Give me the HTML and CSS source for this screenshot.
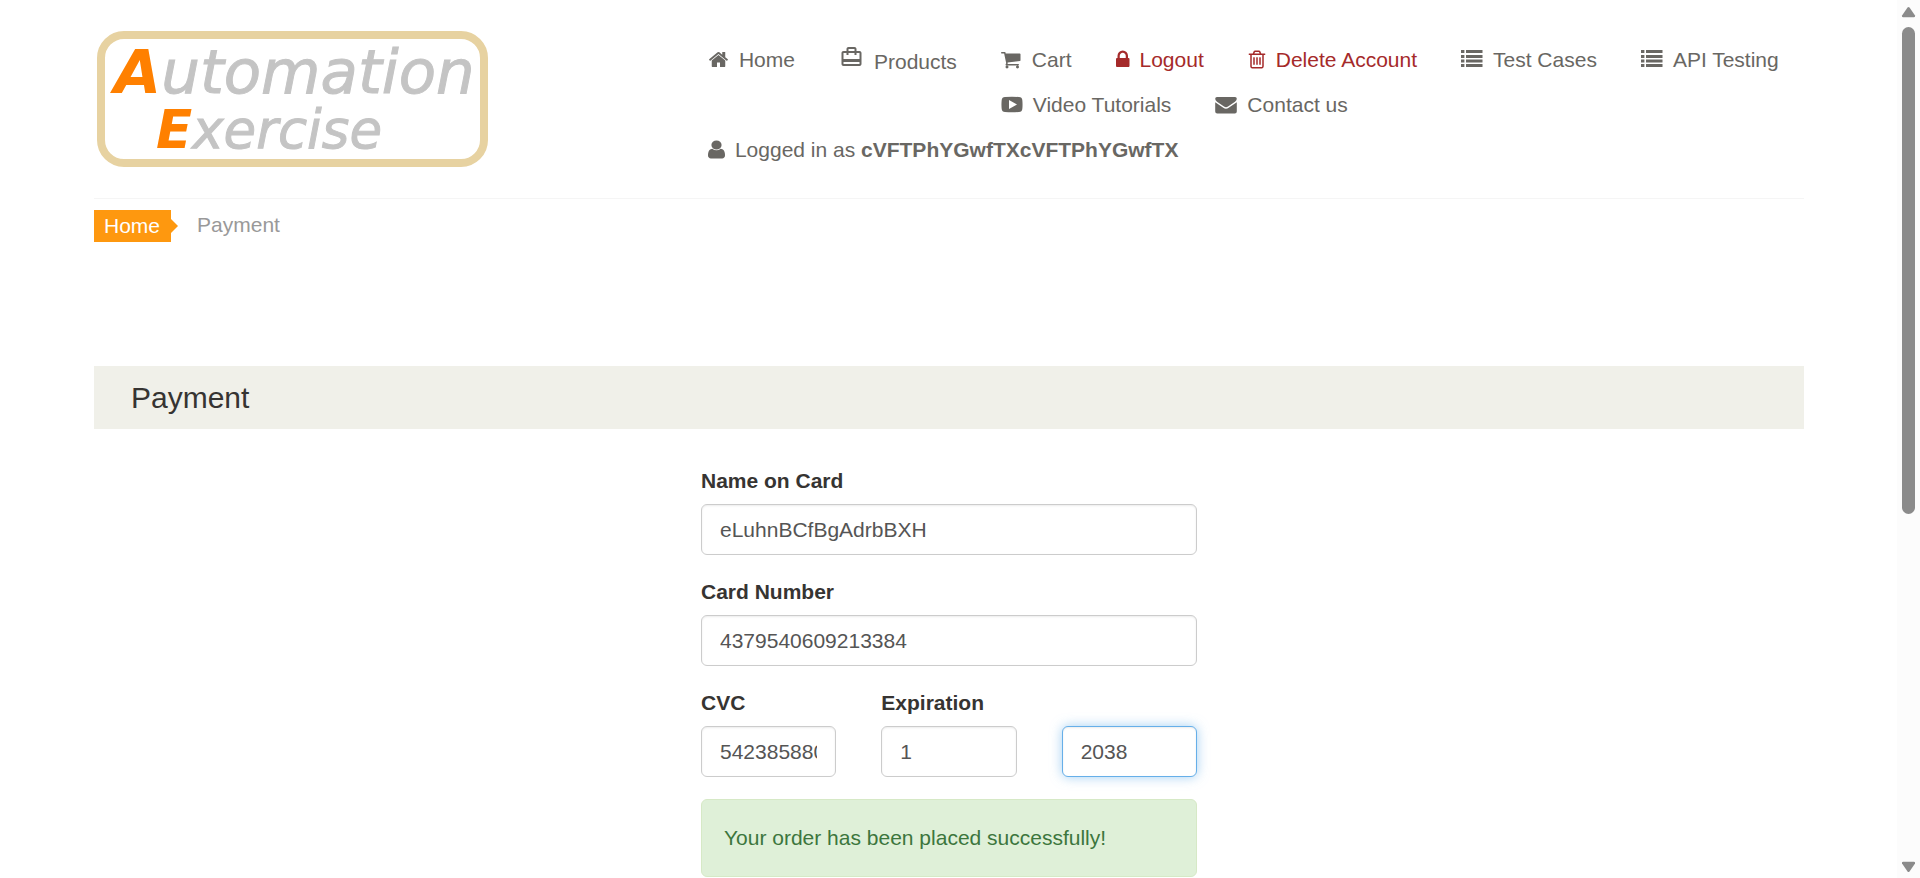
FILE: index.html
```html
<!DOCTYPE html>
<html lang="en">
<head>
<meta charset="utf-8">
<title>Automation Exercise - Payment</title>
<link rel="stylesheet" href="styles.css">
</head>
<body>
<div class="page">
  <header class="header">
    <a class="logo" href="#" aria-label="Automation Exercise">
      <svg width="391" height="136" viewBox="0 0 391 136">
        <rect class="logo-frame" x="4" y="4" width="383" height="128" rx="23"/>
        <text class="logo-line" x="17" y="62"><tspan class="logo-cap">A</tspan>utomation</text>
        <text class="logo-line logo-line-small" x="59" y="117"><tspan class="logo-cap">E</tspan>xercise</text>
      </svg>
    </a>
    <nav>
      <ul class="menu">
        <li><a href="#"><svg class="icon" width="21" height="21" viewBox="0 0 1792 1792"><path d="M1472 992v480q0 26-19 45t-45 19h-384v-384h-256v384h-384q-26 0-45-19t-19-45v-480q0-1 .5-3t.5-3l575-474 575 474q1 2 1 6zm223-69l-62 74q-8 9-21 11h-3q-13 0-21-7l-692-577-692 577q-12 8-24 7-13-2-21-11l-62-74q-8-10-7-23.5t11-21.5l719-599q32-26 76-26t76 26l244 204v-195q0-14 9-23t23-9h192q14 0 23 9t9 23v408l219 182q10 8 11 21.5t-7 23.5z"/></svg>Home</a></li>
        <li><a href="#"><svg class="icon icon-bag" width="25" height="24" viewBox="0 0 24 24"><path d="M20 6h-3V4c0-1.11-.89-2-2-2H9c-1.11 0-2 .89-2 2v2H4c-1.11 0-2 .89-2 2v11c0 1.11.89 2 2 2h16c1.11 0 2-.89 2-2V8c0-1.11-.89-2-2-2zM9 4h6v2H9V4zm11 15H4v-2h16v2zm0-5H4V8h3v2h2V8h6v2h2V8h3v6z"/></svg>Products</a></li>
        <li><a href="#"><svg class="icon" width="21" height="21" viewBox="64 0 1792 1792"><path d="M704 1536q0 52-38 90t-90 38-90-38-38-90 38-90 90-38 90 38 38 90zm896 0q0 52-38 90t-90 38-90-38-38-90 38-90 90-38 90 38 38 90zm128-1088v512q0 24-16.5 42.5t-40.5 21.5l-1044 122q13 60 13 70 0 16-24 64h920q26 0 45 19t19 45-19 45-45 19h-1024q-26 0-45-19t-19-45q0-11 8-31.5t16-36 21.5-40 15.5-29.5l-177-823h-204q-26 0-45-19t-19-45 19-45 45-19h256q16 0 28.5 6.5t19.5 15.5 13 24.5 8 26 5.5 29.5 4.5 26h1201q26 0 45 19t19 45z"/></svg>Cart</a></li>
        <li><a class="danger" href="#"><svg class="icon" width="14" height="21" viewBox="320 0 1195 1792"><path d="M640 768h512v-192q0-106-75-181t-181-75-181 75-75 181v192zm832 96v576q0 40-28 68t-68 28h-960q-40 0-68-28t-28-68v-576q0-40 28-68t68-28h32v-192q0-184 132-316t316-132 316 132 132 316v192h32q40 0 68 28t28 68z"/></svg>Logout</a></li>
        <li><a class="danger" href="#"><svg class="icon" width="18" height="21" viewBox="128 0 1536 1792"><path d="M704 736v576q0 14-9 23t-23 9h-64q-14 0-23-9t-9-23v-576q0-14 9-23t23-9h64q14 0 23 9t9 23zm256 0v576q0 14-9 23t-23 9h-64q-14 0-23-9t-9-23v-576q0-14 9-23t23-9h64q14 0 23 9t9 23zm256 0v576q0 14-9 23t-23 9h-64q-14 0-23-9t-9-23v-576q0-14 9-23t23-9h64q14 0 23 9t9 23zm128 724v-948h-896v948q0 22 7 40.5t14.5 27 10.5 8.5h832q3 0 10.5-8.5t14.5-27 7-40.5zm-672-1076h448l-48-117q-7-9-17-11h-317q-10 2-17 11zm928 32v64q0 14-9 23t-23 9h-96v948q0 83-47 143.5t-113 60.5h-832q-66 0-113-58.5t-47-141.5v-952h-96q-14 0-23-9t-9-23v-64q0-14 9-23t23-9h309l70-167q15-37 54-63t79-26h320q40 0 79 26t54 63l70 167h309q14 0 23 9t9 23z"/></svg>Delete Account</a></li>
        <li><a href="#"><svg class="icon" width="22" height="21" viewBox="0 0 22 21"><path d="M0 1h3.4v3H0zM5 1h16.5v3H5zM0 6h3.4v3H0zM5 6h16.5v3H5zM0 10.500h3.400v3H0zM5 10.500h16.500v3H5zM0 15h3.400v3H0zM5 15h16.500v3H5z"/></svg>Test Cases</a></li>
        <li><a href="#"><svg class="icon" width="22" height="21" viewBox="0 0 22 21"><path d="M0 1h3.4v3H0zM5 1h16.5v3H5zM0 6h3.4v3H0zM5 6h16.5v3H5zM0 10.500h3.400v3H0zM5 10.500h16.500v3H5zM0 15h3.400v3H0zM5 15h16.500v3H5z"/></svg>API Testing</a></li>
        <li><a href="#"><svg class="icon" width="22" height="21" viewBox="0 0 22 21"><path fill-rule="evenodd" d="M4 3Q11 2.600 18 3Q21 3 21.300 6Q21.800 10.500 21.300 15Q21 18 18 18Q11 18.500 4 18Q1 18 .7 15Q.2 10.500 .7 6Q1 3 4 3zM8 6v9l8-4.500z"/></svg>Video Tutorials</a></li>
        <li><a href="#"><svg class="icon" width="22" height="21" viewBox="0 0 22 21"><path d="M2 3h18q1.800 0 1.800 1.800Q21.800 6.500 20 7.800L13 12.600Q11 14 9 12.600L2 7.800Q.2 6.500 .2 4.800Q.2 3 2 3zM.2 8.200L8.300 13.800Q11 15.500 13.700 13.800L21.800 8.200V17.500Q21.800 19.500 19.800 19.500H2.200Q.2 19.500 .2 17.500z"/></svg>Contact us</a></li>
        <li><a href="#"><svg class="icon" width="17" height="21" viewBox="256 0 1280 1792" preserveAspectRatio="none"><path d="M1536 1399q0 109-62.5 187t-150.5 78h-854q-88 0-150.5-78t-62.5-187q0-85 8.5-160.5t31.5-152 58.5-131 94-89 134.5-34.5q131 128 313 128t313-128q76 0 134.5 34.5t94 89 58.5 131 31.5 152 8.5 160.5zm-256-887q0 159-112.5 271.5t-271.5 112.5-271.5-112.500-112.500-271.500 112.500-271.500 271.500-112.500 271.500 112.500 112.500 271.500z"/></svg>Logged in as <b>cVFTPhYGwfTXcVFTPhYGwfTX</b></a></li>
      </ul>
    </nav>
  </header>
  <main>
    <ol class="breadcrumb">
      <li><a class="crumb-home" href="#">Home</a></li>
      <li>Payment</li>
    </ol>
    <h2 class="heading">Payment</h2>
    <form class="form">
      <div class="field">
        <label for="name">Name on Card</label>
        <input class="control" id="name" type="text" value="eLuhnBCfBgAdrbBXH">
      </div>
      <div class="field">
        <label for="number">Card Number</label>
        <input class="control" id="number" type="text" value="4379540609213384">
      </div>
      <div class="field-row">
        <div class="field">
          <label for="cvc">CVC</label>
          <input class="control" id="cvc" type="text" value="5423858808">
        </div>
        <div class="field">
          <label for="month">Expiration</label>
          <input class="control" id="month" type="text" value="1">
        </div>
        <div class="field">
          <input class="control control-active" type="text" aria-label="Expiration year" value="2038">
        </div>
      </div>
      <div class="alert" role="status">Your order has been placed successfully!</div>
    </form>
  </main>
</div>
<div class="scrollbar" aria-hidden="true">
  <svg width="15" height="12" viewBox="0 0 15 12"><path d="M6.500 1.500Q7.500 .4 8.500 1.500L14 9.500Q14.500 11 13 11.300H2Q.5 11 1 9.500z"/></svg>
  <div class="track"><div class="thumb"></div></div>
  <svg width="15" height="12" viewBox="0 0 15 12"><path d="M6.500 10.500Q7.500 11.600 8.500 10.500L14 2.500Q14.500 1 13 .7H2Q.5 1 1 2.500z"/></svg>
</div>
</body>
</html>
```
FILE: styles.css
```css
* {
  box-sizing: border-box;
}

body {
  margin: 0;
  display: flex;
  min-height: 100vh;
  background: #fff;
  color: #363432;
  font: 21px/30px "Liberation Sans", Arial, sans-serif;
}

ul,
ol {
  list-style: none;
  margin: 0;
  padding: 0;
}

a {
  color: inherit;
  text-decoration: none;
}

.page {
  flex: 1;
  min-width: 0;
  max-width: 1897px;
  margin: 0 auto;
  padding: 0 93px 0 94px;
}

.header {
  display: grid;
  grid-template-columns: 9fr 17fr;
  padding: 31px 0 18px;
  border-bottom: 1px solid #f5f5f5;
}

.logo {
  display: block;
  padding-left: 3px;
}

.logo svg {
  display: block;
}

.logo-frame {
  fill: #fff;
  stroke: #e7d2a1;
  stroke-width: 8px;
}

.logo-line {
  fill: #c4c4c4;
  stroke: #c4c4c4;
  stroke-width: 1px;
  font: italic 61px "DejaVu Sans", sans-serif;
}

.logo-line-small {
  font-size: 53px;
}

.logo-cap {
  fill: #ff8000;
  stroke: none;
  font-weight: bold;
}

.menu {
  padding-top: 14px;
}

.menu li {
  float: left;
  padding: 0 22px 15px;
  color: #696763;
}

.menu a {
  display: block;
}

.menu .danger {
  color: brown;
}

.icon {
  margin-right: 10px;
  vertical-align: -3px;
  fill: currentColor;
}

.icon-bag {
  vertical-align: baseline;
}

.breadcrumb {
  display: flex;
  gap: 26px;
  padding-top: 11px;
  color: #999;
}

.crumb-home {
  position: relative;
  display: block;
  padding: 1px 11px 1px 10px;
  background: #fe980f;
  color: #fff;
}

.crumb-home::after {
  content: "";
  position: absolute;
  left: 100%;
  top: 50%;
  margin-top: -7px;
  border: 7px solid transparent;
  border-left-color: #fe980f;
  border-right-width: 0;
}

.heading {
  margin: 124px 0 37px;
  padding-left: 37px;
  background: #f0f0e9;
  font-size: 30px;
  font-weight: normal;
  line-height: 63px;
}

.form {
  display: grid;
  gap: 22px;
  max-width: 496px;
  margin: 0 auto;
}

.field {
  display: flex;
  flex-direction: column;
  justify-content: flex-end;
  gap: 8px;
}

.field label {
  font-weight: bold;
}

.field-row {
  display: grid;
  grid-template-columns: repeat(3, 1fr);
  gap: 45px;
}

.control {
  width: 100%;
  height: 51px;
  padding: 9px 18px;
  border: 1px solid #ccc;
  border-radius: 6px;
  background: #fff;
  box-shadow: inset 0 1px 2px rgba(0, 0, 0, 0.08);
  color: #555;
  font: inherit;
}

.control-active {
  border-color: #66afe9;
  box-shadow: inset 0 1px 2px rgba(0, 0, 0, 0.08), 0 0 12px rgba(102, 175, 233, 0.6);
}

.alert {
  padding: 23px 22px;
  border: 1px solid #d6e9c6;
  border-radius: 6px;
  background: #dff0d8;
  color: #3c763d;
}

.scrollbar {
  flex: 0 0 23px;
  position: sticky;
  top: 0;
  height: 100vh;
  display: flex;
  flex-direction: column;
  align-items: center;
  padding: 6px 0 5px;
  background: #fcfcfc;
  fill: #8b8b8b;
}

.track {
  flex: 1;
  padding: 9px 0;
}

.thumb {
  width: 13px;
  height: 59%;
  min-height: 40px;
  border-radius: 7px;
  background: #8b8b8b;
}
```
